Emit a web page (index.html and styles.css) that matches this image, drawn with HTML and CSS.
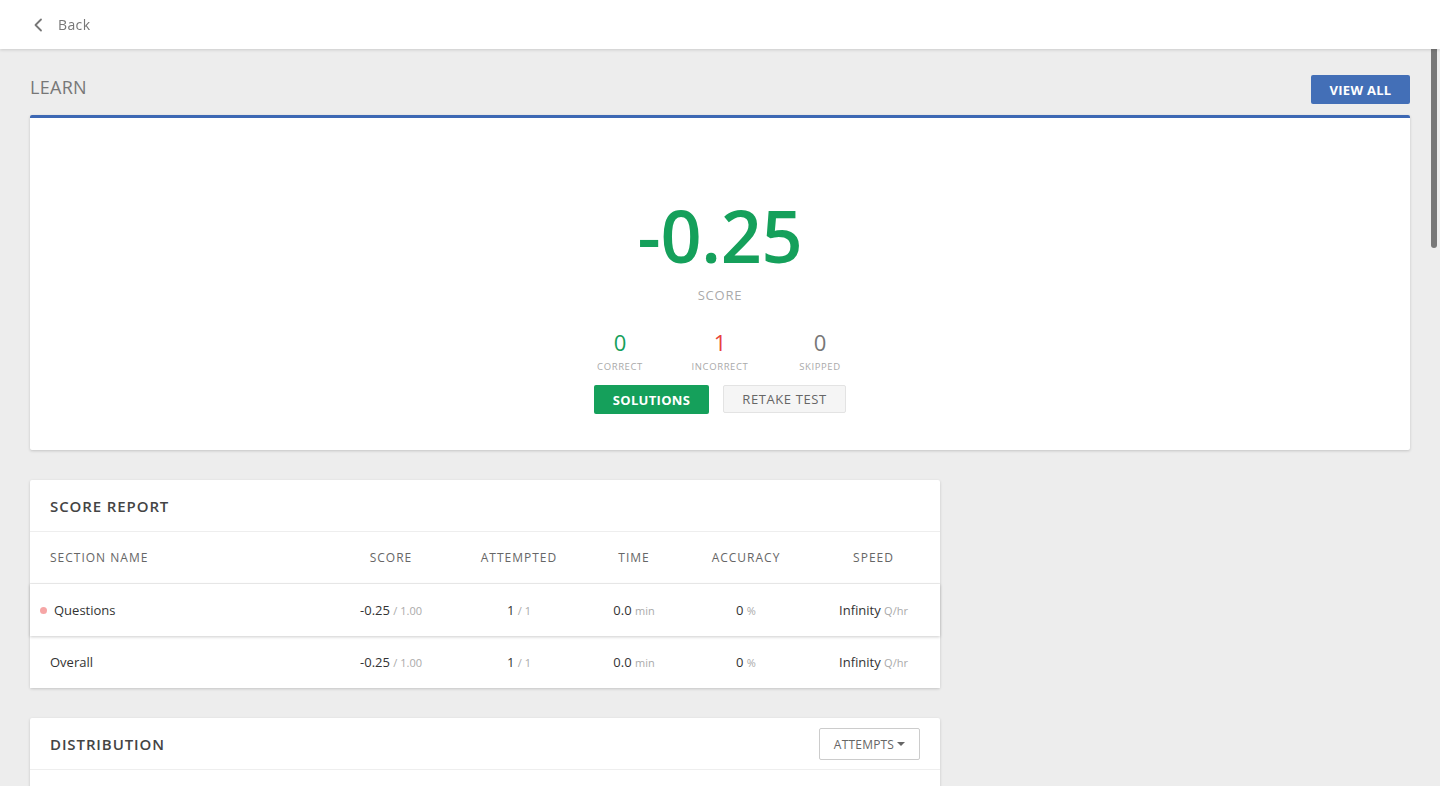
FILE: index.html
```html
<!DOCTYPE html>
<html lang="en">
<head>
<meta charset="utf-8">
<title>Learn - Score</title>
<link rel="stylesheet" href="styles.css">
</head>
<body>
<header class="topbar">
  <a class="back" href="#">
    <svg class="back-icon" width="10" height="14" viewBox="0 0 10 14"><path d="M8 1.5 L2.5 7 L8 12.5" fill="none" stroke="#777" stroke-width="1.8" stroke-linecap="round" stroke-linejoin="round"/></svg>
    <span>Back</span>
  </a>
</header>
<main class="page">
  <div class="title-row">
    <h1 class="page-title">LEARN</h1>
    <button class="btn btn-blue">VIEW ALL</button>
  </div>

  <section class="card score-card">
    <div class="big-score">-0.25</div>
    <div class="big-label">SCORE</div>
    <div class="stats">
      <div class="stat"><div class="stat-num green">0</div><div class="stat-label">CORRECT</div></div>
      <div class="stat"><div class="stat-num red">1</div><div class="stat-label">INCORRECT</div></div>
      <div class="stat"><div class="stat-num gray">0</div><div class="stat-label">SKIPPED</div></div>
    </div>
    <div class="actions">
      <button class="btn btn-green">SOLUTIONS</button>
      <button class="btn btn-light">RETAKE TEST</button>
    </div>
  </section>

  <section class="card report">
    <div class="card-head"><h2>SCORE REPORT</h2></div>
    <div class="grid-row head-row">
      <div class="c-name">SECTION NAME</div>
      <div>SCORE</div>
      <div>ATTEMPTED</div>
      <div>TIME</div>
      <div>ACCURACY</div>
      <div>SPEED</div>
    </div>
    <div class="grid-row data-row raised">
      <div class="c-name has-dot"><span class="dot"></span>Questions</div>
      <div>-0.25 <small>/ 1.00</small></div>
      <div>1 <small>/ 1</small></div>
      <div>0.0 <small>min</small></div>
      <div>0 <small>%</small></div>
      <div>Infinity <small>Q/hr</small></div>
    </div>
    <div class="grid-row data-row">
      <div class="c-name">Overall</div>
      <div>-0.25 <small>/ 1.00</small></div>
      <div>1 <small>/ 1</small></div>
      <div>0.0 <small>min</small></div>
      <div>0 <small>%</small></div>
      <div>Infinity <small>Q/hr</small></div>
    </div>
  </section>

  <section class="card report dist">
    <div class="card-head">
      <h2>DISTRIBUTION</h2>
      <button class="btn btn-outline">ATTEMPTS<span class="caret"></span></button>
    </div>
    <div class="dist-body"></div>
  </section>
</main>
<div class="scroll-thumb"></div>
</body>
</html>
```

FILE: styles.css
```css
html, body {
  margin: 0;
  padding: 0;
  height: 100%;
  overflow: hidden;
}
body {
  background: #ededed;
  font-family: "Open Sans", "Noto Sans", "Liberation Sans", sans-serif;
  color: #333;
}
.topbar {
  height: 49px;
  background: #fff;
  box-shadow: 0 1px 3px rgba(0,0,0,0.15);
  display: flex;
  align-items: center;
  padding-left: 33px;
  position: relative;
  z-index: 2;
}
.back {
  display: flex;
  align-items: center;
  gap: 15px;
  color: #777;
  text-decoration: none;
  font-size: 14px;
  letter-spacing: 0.4px;
}
.back-icon { display: block; }

.page {
  padding: 26px 30px 0 30px;
}
.title-row {
  display: flex;
  justify-content: space-between;
  align-items: flex-start;
  height: 29px;
  margin-bottom: 11px;
}
.page-title {
  margin: 0;
  font-size: 18px;
  line-height: 24px;
  font-weight: 400;
  color: #777;
  letter-spacing: 0.3px;
}
.btn {
  font-family: inherit;
  border: none;
  cursor: pointer;
  padding: 0;
  display: inline-flex;
  align-items: center;
  justify-content: center;
}
.btn-blue {
  width: 99px;
  height: 29px;
  background: #436fb7;
  color: #fff;
  font-size: 13px;
  font-weight: 700;
  letter-spacing: 0.3px;
  border-radius: 2px;
}
.card {
  background: #fff;
  box-shadow: 0 1px 3px rgba(0,0,0,0.18);
  border-radius: 2px;
}
.score-card {
  border-top: 3px solid #3d68b4;
  padding: 77px 0 36px 0;
  display: flex;
  flex-direction: column;
  align-items: center;
}
.big-score {
  font-size: 72px;
  line-height: 80px;
  font-weight: 600;
  color: #15a05b;
  letter-spacing: -0.3px;
}
.big-label {
  margin-top: 11px;
  font-size: 13px;
  line-height: 18px;
  color: #aaa;
  letter-spacing: 0.8px;
}
.stats {
  margin-top: 25px;
  display: flex;
}
.stat {
  width: 100px;
  display: flex;
  flex-direction: column;
  align-items: center;
}
.stat-num {
  font-size: 22px;
  line-height: 26px;
}
.green { color: #15a05b; }
.red { color: #e8433a; }
.gray { color: #777; }
.stat-label {
  margin-top: 5px;
  font-size: 9.5px;
  line-height: 14px;
  color: #aaa;
  letter-spacing: 0.6px;
}
.actions {
  margin-top: 11px;
  display: flex;
  gap: 14px;
  align-items: flex-start;
}
.btn-green {
  width: 115px;
  height: 29px;
  background: #15a05b;
  color: #fff;
  font-size: 13px;
  font-weight: 700;
  letter-spacing: 0.3px;
  border-radius: 2px;
}
.btn-light {
  width: 123px;
  height: 28px;
  background: #f5f5f5;
  border: 1px solid #e3e3e3;
  color: #666;
  font-size: 13px;
  letter-spacing: 0.6px;
  border-radius: 2px;
  box-sizing: border-box;
}

.report {
  width: 910px;
  margin-top: 30px;
}
.card-head {
  height: 51px;
  border-bottom: 1px solid #eee;
  display: flex;
  align-items: center;
  justify-content: space-between;
  padding: 0 20px;
}
.card-head h2 {
  margin: 0;
  font-size: 15px;
  font-weight: 600;
  color: #444;
  letter-spacing: 0.9px;
}
.grid-row {
  display: grid;
  grid-template-columns: 1fr 128px 128px 102px 122px 133px;
  padding-left: 20px;
  align-items: center;
  text-align: center;
}
.grid-row .c-name {
  text-align: left;
  position: relative;
}
.grid-row .has-dot {
  padding-left: 4px;
}
.head-row {
  height: 51px;
  border-bottom: 1px solid #eee;
  font-size: 12px;
  color: #666;
  letter-spacing: 1px;
}
.data-row {
  height: 52px;
  font-size: 13px;
  color: #333;
  background: #fff;
}
.data-row small {
  font-size: 11px;
  color: #aaa;
}
.raised {
  position: relative;
  z-index: 1;
  box-shadow: 0 1px 3px rgba(0,0,0,0.2);
}
.dot {
  position: absolute;
  left: -10px;
  top: 6px;
  width: 7px;
  height: 7px;
  border-radius: 50%;
  background: #f6a6a6;
}
.btn-outline {
  width: 101px;
  height: 32px;
  margin-top: 1px;
  background: #fff;
  border: 1px solid #ccc;
  border-radius: 2px;
  color: #666;
  font-size: 12px;
  box-sizing: border-box;
  letter-spacing: 0.2px;
}
.caret {
  display: inline-block;
  margin-left: 3px;
  width: 0;
  height: 0;
  border-left: 4px solid transparent;
  border-right: 4px solid transparent;
  border-top: 4px solid #666;
}
.dist-body {
  height: 200px;
}
.scroll-thumb {
  position: fixed;
  right: 3px;
  top: 2px;
  width: 6px;
  height: 246px;
  border-radius: 3px;
  background: #787878;
}
```
